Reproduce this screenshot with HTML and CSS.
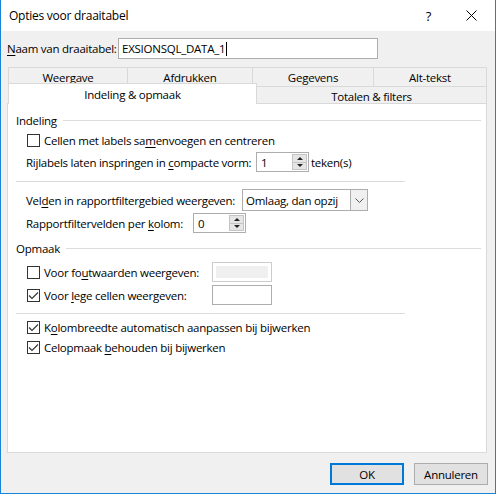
FILE: index.html
```html
<!DOCTYPE html>
<html>
<head>
    <meta charset="utf-8" />
    <title>Opties voor draaitabel</title>
    <link rel="stylesheet" href="styles.css">
</head>
<body>
<div class="dialog">
    <div class="titlebar">
        <span class="titleText">Opties voor draaitabel</span>
        <span class="titleHelp">?</span>
        <span class="titleClose">
            <svg width="11" height="11" viewBox="0 0 11 11"><path d="M0.5 0.5 L10.5 10.5 M10.5 0.5 L0.5 10.5" stroke="#000" stroke-width="1" fill="none"/></svg>
        </span>
    </div>

    <div class="content">
        <div class="nameRow">
            <span class="nameLabel"><u>N</u>aam van draaitabel:</span>
            <div class="textBox nameBox">EXSIONSQL_DATA_1<span class="caret"></span></div>
        </div>

        <div class="tabs">
            <div class="tabRow backRow">
                <div class="tab w1">Weergave</div>
                <div class="tab w2">Afdrukken</div>
                <div class="tab w3">Gegevens</div>
                <div class="tab w4">Alt-tekst</div>
            </div>
            <div class="tabRow frontRow">
                <div class="tab active">Indeling &amp; opmaak</div>
                <div class="tab wide">Totalen &amp; filters</div>
            </div>
        </div>

        <div class="panel">
            <div class="groupHead"><span>Indeling</span><div class="groupLine"></div></div>

            <div class="row check1">
                <span class="checkbox"></span>
                <span>Cellen met labels sa<u>m</u>envoegen en centreren</span>
            </div>

            <div class="row spinRow">
                <span class="label lblIndent">Rijlabels laten inspringen in <u>c</u>ompacte vorm:</span>
                <div class="spinner"><span class="spinValue">1</span><div class="spinButtons"><span class="spinUp"></span><span class="spinDown"></span></div></div>
                <span class="unit">teken(s)</span>
            </div>

            <div class="separator"></div>

            <div class="row comboRow">
                <span class="label lblArea">Vel<u>d</u>en in rapportfiltergebied weergeven:</span>
                <div class="combo">
                    <span class="comboValue">Omlaag, dan opzij</span>
                    <span class="comboArrow">
                        <svg width="9" height="5" viewBox="0 0 9 5"><path d="M0.5 0.5 L4.5 4.5 L8.5 0.5" stroke="#555" stroke-width="1" fill="none"/></svg>
                    </span>
                </div>
            </div>

            <div class="row spinRow2">
                <span class="label lblPer">Rapportfiltervelden per <u>k</u>olom:</span>
                <div class="spinner"><span class="spinValue">0</span><div class="spinButtons"><span class="spinUp"></span><span class="spinDown"></span></div></div>
            </div>

            <div class="groupHead opmaak"><span>Opmaak</span><div class="groupLine"></div></div>

            <div class="row fieldRow first">
                <span class="checkbox"></span>
                <span class="label lblField">Voor fo<u>u</u>twaarden weergeven:</span>
                <div class="textBox small disabled"></div>
            </div>

            <div class="row fieldRow">
                <span class="checkbox checked"><svg width="11" height="11" viewBox="0 0 11 11"><path d="M1 5.5 L4 8.5 L10 2.5" stroke="#333" stroke-width="1.1" fill="none"/></svg></span>
                <span class="label lblField">Voor <u>l</u>ege cellen weergeven:</span>
                <div class="textBox small"></div>
            </div>

            <div class="separator sep2"></div>

            <div class="row check3">
                <span class="checkbox checked"><svg width="11" height="11" viewBox="0 0 11 11"><path d="M1 5.5 L4 8.5 L10 2.5" stroke="#333" stroke-width="1.1" fill="none"/></svg></span>
                <span>K<u>o</u>lombreedte automatisch aanpassen bij bijwerken</span>
            </div>

            <div class="row check4">
                <span class="checkbox checked"><svg width="11" height="11" viewBox="0 0 11 11"><path d="M1 5.5 L4 8.5 L10 2.5" stroke="#333" stroke-width="1.1" fill="none"/></svg></span>
                <span>Celopmaak <u>b</u>ehouden bij bijwerken</span>
            </div>
        </div>

        <div class="footer">
            <div class="button default">OK</div>
            <div class="button">Annuleren</div>
        </div>
    </div>
</div>
</body>
</html>
```

FILE: styles.css
```css
html, body {
    margin: 0; padding: 0;
}
body {
    font-family: "Open Sans", "Noto Sans", sans-serif; font-size: 11.5px; color: #000;
    letter-spacing: -0.25px;
    width: 496px; height: 494px; overflow: hidden;
    white-space: nowrap;
}
u { text-decoration: underline; text-underline-offset: 2px; }

.dialog {
    width: 496px; height: 494px; box-sizing: border-box;
    border: 1px solid #1883d7; border-top: none;
    background-color: #f0f0f0;
    display: flex; flex-direction: column;
}

/* title bar */
.titlebar {
    height: 31px; background-color: #fff;
    display: flex; align-items: center;
}
.titleText { margin-left: 8px; flex: 1; font-size: 12px; }
.titleHelp { margin-right: 35px; font-size: 13px; }
.titleClose { margin-right: 18px; display: flex; }

.content {
    flex: 1; display: flex; flex-direction: column;
    padding: 0 8px 0 6px;
}

/* name of the pivot table */
.nameRow {
    display: flex; align-items: center;
    margin-top: 7px; height: 21px;
}
.nameLabel { width: 111px; }
.textBox {
    box-sizing: border-box; background-color: #fff;
    border: 1px solid #adadad;
    height: 20px;
    display: flex; align-items: center;
}
.nameBox { width: 260px; height: 21px; padding-left: 3px; }
.caret { width: 1px; height: 14px; background-color: #000; margin-left: 1px; }

/* tabs, two rows */
.tabs { margin-top: 8px; margin-left: 1px; width: 479px; }
.tabRow { display: flex; }
.backRow { height: 19px; }
.frontRow { height: 17px; }
.tab {
    box-sizing: border-box;
    border: 1px solid #d9d9d9; border-bottom: none;
    display: flex; align-items: center; justify-content: center;
    background-color: #f0f0f0;
}
.backRow .tab + .tab, .frontRow .tab + .tab { border-left: none; }
.w1 { width: 120px; }
.w2 { width: 125px; }
.w3 { width: 121px; }
.w4 { width: 113px; }
.frontRow .tab { padding-top: 2px; }
.tab.active {
    width: 249px; height: 21px; margin-top: -3px;
    background-color: #fff; position: relative; z-index: 1;
    padding-top: 0;
}
.tab.wide { flex: 1; border-left: none; }

/* white page below the tabs */
.panel {
    box-sizing: border-box;
    width: 480px; height: 350px;
    background-color: #fff; border: 1px solid #d9d9d9;
    padding: 9px 0 0 8px;
    display: flex; flex-direction: column;
}

.groupHead {
    display: flex; align-items: center; height: 14px;
}
.groupLine { flex: 1; height: 1px; background-color: #dcdcdc; margin: 0 5px 0 6px; }
.groupHead.opmaak { margin-top: 8px; }

.separator { height: 1px; background-color: #dcdcdc; width: 389px; margin-top: 9px; }
.separator.sep2 { margin-top: 8px; }

.row { display: flex; align-items: center; padding-left: 10px; }
.label { flex-shrink: 0; }

.checkbox {
    box-sizing: border-box; width: 13px; height: 13px;
    border: 1px solid #333; background-color: #fff;
    margin-left: 1px; margin-right: 4px; flex-shrink: 0;
    display: flex; align-items: center; justify-content: center;
}

.check1 { height: 16px; margin-top: 5px; }
.spinRow { height: 20px; margin-top: 4px; }
.lblIndent { width: 230px; }
.unit { margin-left: 2px; }

.spinner {
    box-sizing: border-box; width: 53px; height: 20px;
    border: 1px solid #adadad; background-color: #fff;
    display: flex; align-items: center;
}
.spinValue { flex: 1; padding-left: 4px; }
.spinButtons {
    width: 15px; height: 16px; margin-right: 1px;
    display: flex; flex-direction: column;
}
.spinUp, .spinDown {
    flex: 1; box-sizing: border-box;
    background-color: #e5e5e5; border: 1px solid #c4c4c4;
    position: relative;
}
.spinDown { border-top: none; }
.spinUp::after, .spinDown::after {
    content: ""; position: absolute; left: 4px; width: 0; height: 0;
    border-left: 3px solid transparent; border-right: 3px solid transparent;
}
.spinUp::after { top: 2px; border-bottom: 3px solid #222; }
.spinDown::after { top: 1px; border-top: 3px solid #222; }

.comboRow { height: 22px; margin-top: 7px; }
.lblArea { width: 216px; }
.combo {
    box-sizing: border-box; width: 126px; height: 22px;
    border: 1px solid #adadad; background-color: #fff;
    display: flex; align-items: center;
}
.comboValue { flex: 1; padding-left: 3px; }
.comboArrow {
    box-sizing: border-box; width: 17px; height: 20px;
    border-left: 1px solid #adadad; background-color: #f0f0f0;
    display: flex; align-items: center; justify-content: center;
}

.spinRow2 { height: 20px; margin-top: 2px; }
.lblPer { width: 167px; }

.fieldRow { height: 20px; margin-top: 3px; }
.fieldRow.first { margin-top: 7px; }
.lblField { width: 168px; }
.textBox.small { width: 60px; }
.textBox.disabled { background-color: #f0f0f0; border-color: #cccccc; box-shadow: inset 0 0 0 3px #fff; }

.check3 { height: 16px; margin-top: 5px; }
.check4 { height: 16px; margin-top: 4px; }

/* dialog buttons */
.footer {
    display: flex; justify-content: flex-end;
    margin-top: 10px; margin-right: -1px;
}
.button {
    box-sizing: border-box; width: 74px; height: 22px;
    background-color: #e1e1e1; border: 1px solid #adadad;
    display: flex; align-items: center; justify-content: center;
    margin-left: 10px;
}
.button.default { border: 2px solid #0078d7; }
```
